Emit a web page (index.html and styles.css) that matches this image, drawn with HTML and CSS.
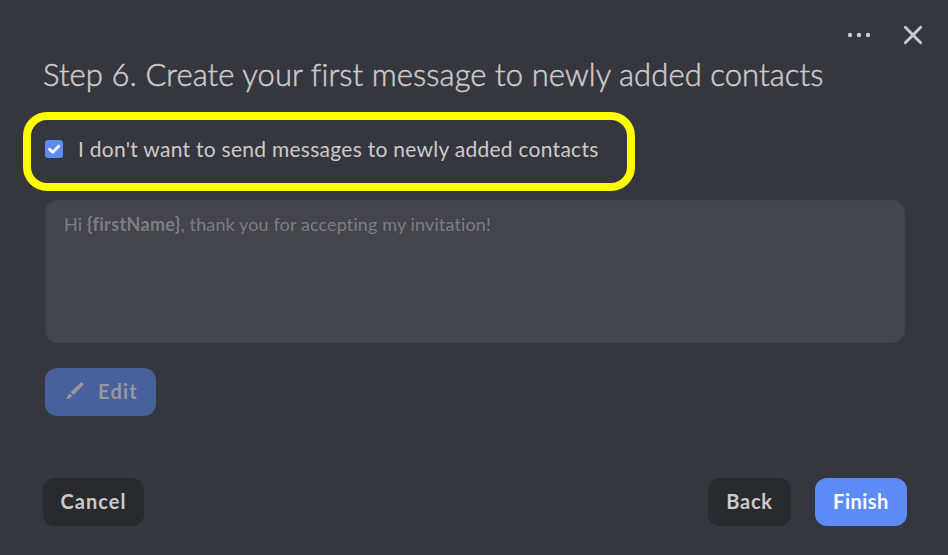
FILE: index.html
```html
<!DOCTYPE html>
<html lang="en">
<head>
<meta charset="utf-8">
<title>Step 6</title>
<link rel="stylesheet" href="styles.css">
</head>
<body>
<main class="dialog">
  <div class="tools">
    <svg width="24" height="6" viewBox="0 0 24 6"><circle cx="3" cy="3" r="2.2"/><circle cx="12" cy="3" r="2.2"/><circle cx="21" cy="3" r="2.2"/></svg>
    <svg class="close" width="20" height="20" viewBox="0 0 20 20"><path d="M2.3 2.3 17.7 17.7M17.7 2.3 2.3 17.7"/></svg>
  </div>
  <h1><span class="title">Step 6. Create your first message to newly added contacts</span></h1>
  <label class="option">
    <svg class="check" width="18" height="18" viewBox="0 0 18 18"><rect width="18" height="18" rx="3"/><path d="M4.5 9.2 7.7 12.3 13.7 6.3"/></svg>
    <span class="option-text">I don't want to send messages to newly added contacts</span>
  </label>
  <div class="message"><span class="message-text">Hi <b>{firstName}</b>, thank you for accepting my invitation!</span></div>
  <button class="btn edit" disabled>
    <svg width="18" height="18" viewBox="0 0 18 18"><path d="M14.3.9Q15.8-.2 16.8.9T17 3.3L7.6 13 4.6 10ZM3.6 11.4 6.4 14.1 4.8 15.6Q3.5 16.8.6 17.2 .8 14.2 2.1 13Z"/></svg>
    <span class="edit-text">Edit</span>
  </button>
  <footer>
    <button class="btn cancel">Cancel</button>
    <button class="btn back">Back</button>
    <button class="btn finish">Finish</button>
  </footer>
</main>
</body>
</html>
```
FILE: styles.css
```css
* { box-sizing: border-box; }
body { margin: 0; background: #36363e; color: #cbcbcb; font-family: Lato, "Open Sans", sans-serif; font-variant-ligatures: none; }
.dialog { height: 555px; padding: 25px 24px 0 23px; display: flex; flex-direction: column; align-items: flex-start; }
.tools { align-self: flex-end; height: 20px; display: flex; align-items: center; gap: 32px; fill: #cbcbcb; }
.close { fill: none; stroke: #cbcbcb; stroke-width: 2.9; stroke-linecap: round; margin-right: 1px; }
h1 { margin: 10px 0 0 20px; height: 40px; font-size: 31px; line-height: 38px; font-weight: 300; white-space: nowrap; }
.title { letter-spacing: 0.08px; -webkit-text-stroke: 0.5px #cbcbcb; }
.option { margin-top: 17px; width: 612px; height: 79px; border: 8px solid #ff0; border-radius: 24px; padding: 0 0 4px 14px; display: flex; align-items: center; gap: 15px; font-size: 21px; white-space: nowrap; }
.option-text { letter-spacing: .27px; padding-bottom: 2px; }
.check { fill: #5c8df6; margin-bottom: 1px; }
.check path { fill: none; stroke: #fff; stroke-width: 2.8; stroke-linecap: round; stroke-linejoin: round; }
.message { margin: 9px 0 0 22px; width: 860px; height: 143px; border: 1px solid #42424a; border-radius: 12px; background: #44444c; color: #7e7e80; padding: 10px 18px; font-size: 18px; line-height: 26px; white-space: nowrap; letter-spacing: .12px; }
.message b { letter-spacing: .35px; }
.btn { border: 0; border-radius: 12px; height: 48px; padding: 0 0 2px; font-family: inherit; font-size: 20px; font-weight: 700; color: #cbcbcb; background: #292a2e; display: flex; align-items: center; justify-content: center; letter-spacing: .5px; }
.edit { margin: 25px 0 0 22px; width: 111px; padding-left: 3px; background: #48609c; color: #97989c; fill: #97989c; gap: 14px; }
.edit-text { letter-spacing: 1.2px; }
footer { display: flex; width: 864px; margin: 62px 0 0 20px; }
.cancel { width: 101px; letter-spacing: 1px; }
.back { width: 83px; margin-left: auto; margin-right: 24px; letter-spacing: .8px; }
.finish { width: 92px; background: #5c8bf6; color: #fff; }
```
